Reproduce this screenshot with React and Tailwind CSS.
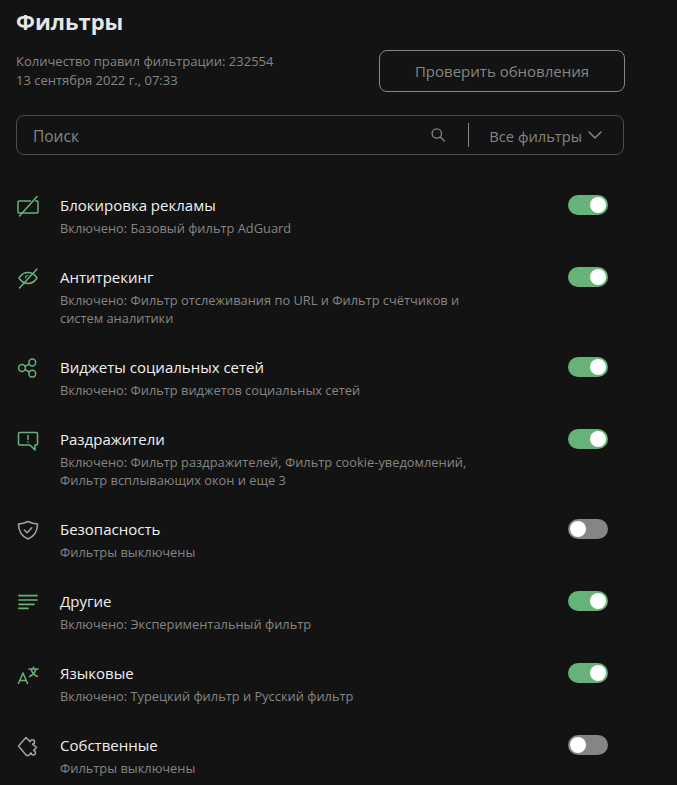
import React from 'react';

const GREEN = '#67b279';
const GRAY = '#a4a4a4';

const Svg = ({ color, children }) => (
  <svg width="24" height="24" viewBox="0 0 24 24" fill="none" stroke={color} strokeWidth="1.5" strokeLinecap="round" strokeLinejoin="round">
    {children}
  </svg>
);

const icons = {
  ads: (
    <Svg color={GREEN}>
      <path d="M14.500 7H3a1 1 0 0 0-1 1v10a1 1 0 0 0 1 1h18a1 1 0 0 0 1-1V8a1 1 0 0 0-1-1h-1.500" />
      <path d="M21 2.500 3.500 22" />
    </Svg>
  ),
  track: (
    <Svg color={GREEN}>
      <path d="M3 12c2.500-4 5.500-5.500 9-5.500s6.500 1.500 9 5.500c-2.500 4-5.500 5.500-9 5.500S5.500 16 3 12z" />
      <path strokeWidth="1.200" d="M9.500 12a2.500 2.500 0 0 1 2.500-2.500" />
      <path d="M21 3 3.500 22" />
    </Svg>
  ),
  social: (
    <Svg color={GREEN}>
      <circle cx="6" cy="12" r="3.400" />
      <circle cx="16.300" cy="6.500" r="3.400" />
      <circle cx="16.300" cy="17.700" r="3.400" />
      <path d="m9 10.400 4.300-2.300M9 13.600l4.300 2.400" />
    </Svg>
  ),
  annoy: (
    <Svg color={GREEN}>
      <path d="M3.500 4.500h17a1 1 0 0 1 1 1v10.500a1 1 0 0 1-1 1H19v5l-5-5H3.500a1 1 0 0 1-1-1V5.500a1 1 0 0 1 1-1z" />
      <path d="M12 7.500v4M12 14v.2" />
    </Svg>
  ),
  shield: (
    <Svg color={GRAY}>
      <path d="M12 3.500c3 1.500 6 2.300 9.500 2.500 0 7-2.800 12-9.500 15-6.700-3-9.500-8-9.500-15C6 5.800 9 5 12 3.500z" />
      <path d="m8.300 12 2.800 2.800 4.700-5" />
    </Svg>
  ),
  other: (
    <Svg color={GREEN}>
      <path strokeWidth="1.700" d="M3 5.700h18M3 10h18M3 14.300h15M3 18.300h9" />
    </Svg>
  ),
  lang: (
    <Svg color={GREEN}>
      <path d="M2.500 21.500 7 11l4.500 10.500M4 18.500h6" />
      <path d="M13 7h9M17.500 5v2M20 7c-1 3.500-3 6-6.500 7.500M15 7c1 3.500 3 6 6.500 7.500" />
    </Svg>
  ),
  custom: (
    <Svg color={GRAY}>
      <path d="M2.500 12 10 3.500l4.200 4.200a2.200 2.200 0 1 1 2.400 2.400l3.900 3.400-3 3a2.200 2.200 0 1 1-2.400 2.400l-2.600 2.600h-2z" />
    </Svg>
  ),
};

const groups = [
  { icon: 'ads', title: 'Блокировка рекламы', lines: ['Включено: Базовый фильтр AdGuard'], on: true },
  { icon: 'track', title: 'Антитрекинг', lines: ['Включено: Фильтр отслеживания по URL и Фильтр счётчиков и', 'систем аналитики'], on: true },
  { icon: 'social', title: 'Виджеты социальных сетей', lines: ['Включено: Фильтр виджетов социальных сетей'], on: true },
  { icon: 'annoy', title: 'Раздражители', lines: ['Включено: Фильтр раздражителей, Фильтр cookie-уведомлений,', 'Фильтр всплывающих окон и еще 3'], on: true },
  { icon: 'shield', title: 'Безопасность', lines: ['Фильтры выключены'], on: false },
  { icon: 'other', title: 'Другие', lines: ['Включено: Экспериментальный фильтр'], on: true },
  { icon: 'lang', title: 'Языковые', lines: ['Включено: Турецкий фильтр и Русский фильтр'], on: true },
  { icon: 'custom', title: 'Собственные', lines: ['Фильтры выключены'], on: false },
];

const Toggle = ({ on }) => (
  <div className={`mt-[3px] flex h-5 w-10 shrink-0 items-center rounded-full px-[2px] ${on ? 'justify-end bg-[#67b279]' : 'justify-start bg-[#858585]'}`}>
    <div className="h-4 w-4 rounded-full bg-white" />
  </div>
);

const App = () => {
  return (
    <div className="h-[785px] w-[677px] overflow-hidden bg-[#131313] pl-4 pr-[53px] font-['Open_Sans',sans-serif]">
      <h1 className="pt-[7px] text-[22px] font-bold leading-[28px] text-[#e6e6e6]">Фильтры</h1>

      <div className="mt-[15px] flex items-start justify-between">
        <div className="pt-[2px] text-[13px] leading-[19px] text-[#858585]">
          <div>Количество правил фильтрации: 232554</div>
          <div>13 сентября 2022 г., 07:33</div>
        </div>
        <button className="-mr-px h-[42px] w-[246px] rounded-[8px] border border-[#858585] text-[15px] text-[#858585]">
          Проверить обновления
        </button>
      </div>

      <div className="mt-[23px] flex h-[40px] items-center rounded-[8px] border border-[#4d4d4d] pl-4 pr-[21px] text-[14.700px] leading-[24px] text-[#858585]">
        <span className="flex-1 pt-[2px] text-[15.500px]">Поиск</span>
        <svg width="16" height="16" viewBox="0 0 16 16" fill="none" stroke="#858585" strokeWidth="1.300" strokeLinecap="round">
          <circle cx="6.800" cy="6.500" r="4.700" />
          <path d="m10.300 10 4 4" />
        </svg>
        <div className="ml-[22px] mr-[20px] h-[24px] w-px bg-[#858585]" />
        <span className="pt-[2px]">Все фильтры</span>
        <svg className="ml-[6px]" width="14" height="8" viewBox="0 0 14 8" fill="none" stroke="#858585" strokeWidth="1.500" strokeLinecap="round" strokeLinejoin="round">
          <path d="m1 1 6 6 6-6" />
        </svg>
      </div>

      <div className="mt-[37px] flex flex-col gap-[27px] pr-4">
        {groups.map((g) => (
          <div key={g.title} className="flex items-start">
            <div className="mr-[20px] mt-[2px] shrink-0">{icons[g.icon]}</div>
            <div className="flex-1">
              <div className="mb-px text-[15px] leading-[26px] text-[#f0f0f0]">{g.title}</div>
              <div className="text-[12.850px] leading-[18px] text-[#858585]">
                {g.lines.map((l) => (
                  <div key={l}>{l}</div>
                ))}
              </div>
            </div>
            <Toggle on={g.on} />
          </div>
        ))}
      </div>
    </div>
  );
};

export default App;
